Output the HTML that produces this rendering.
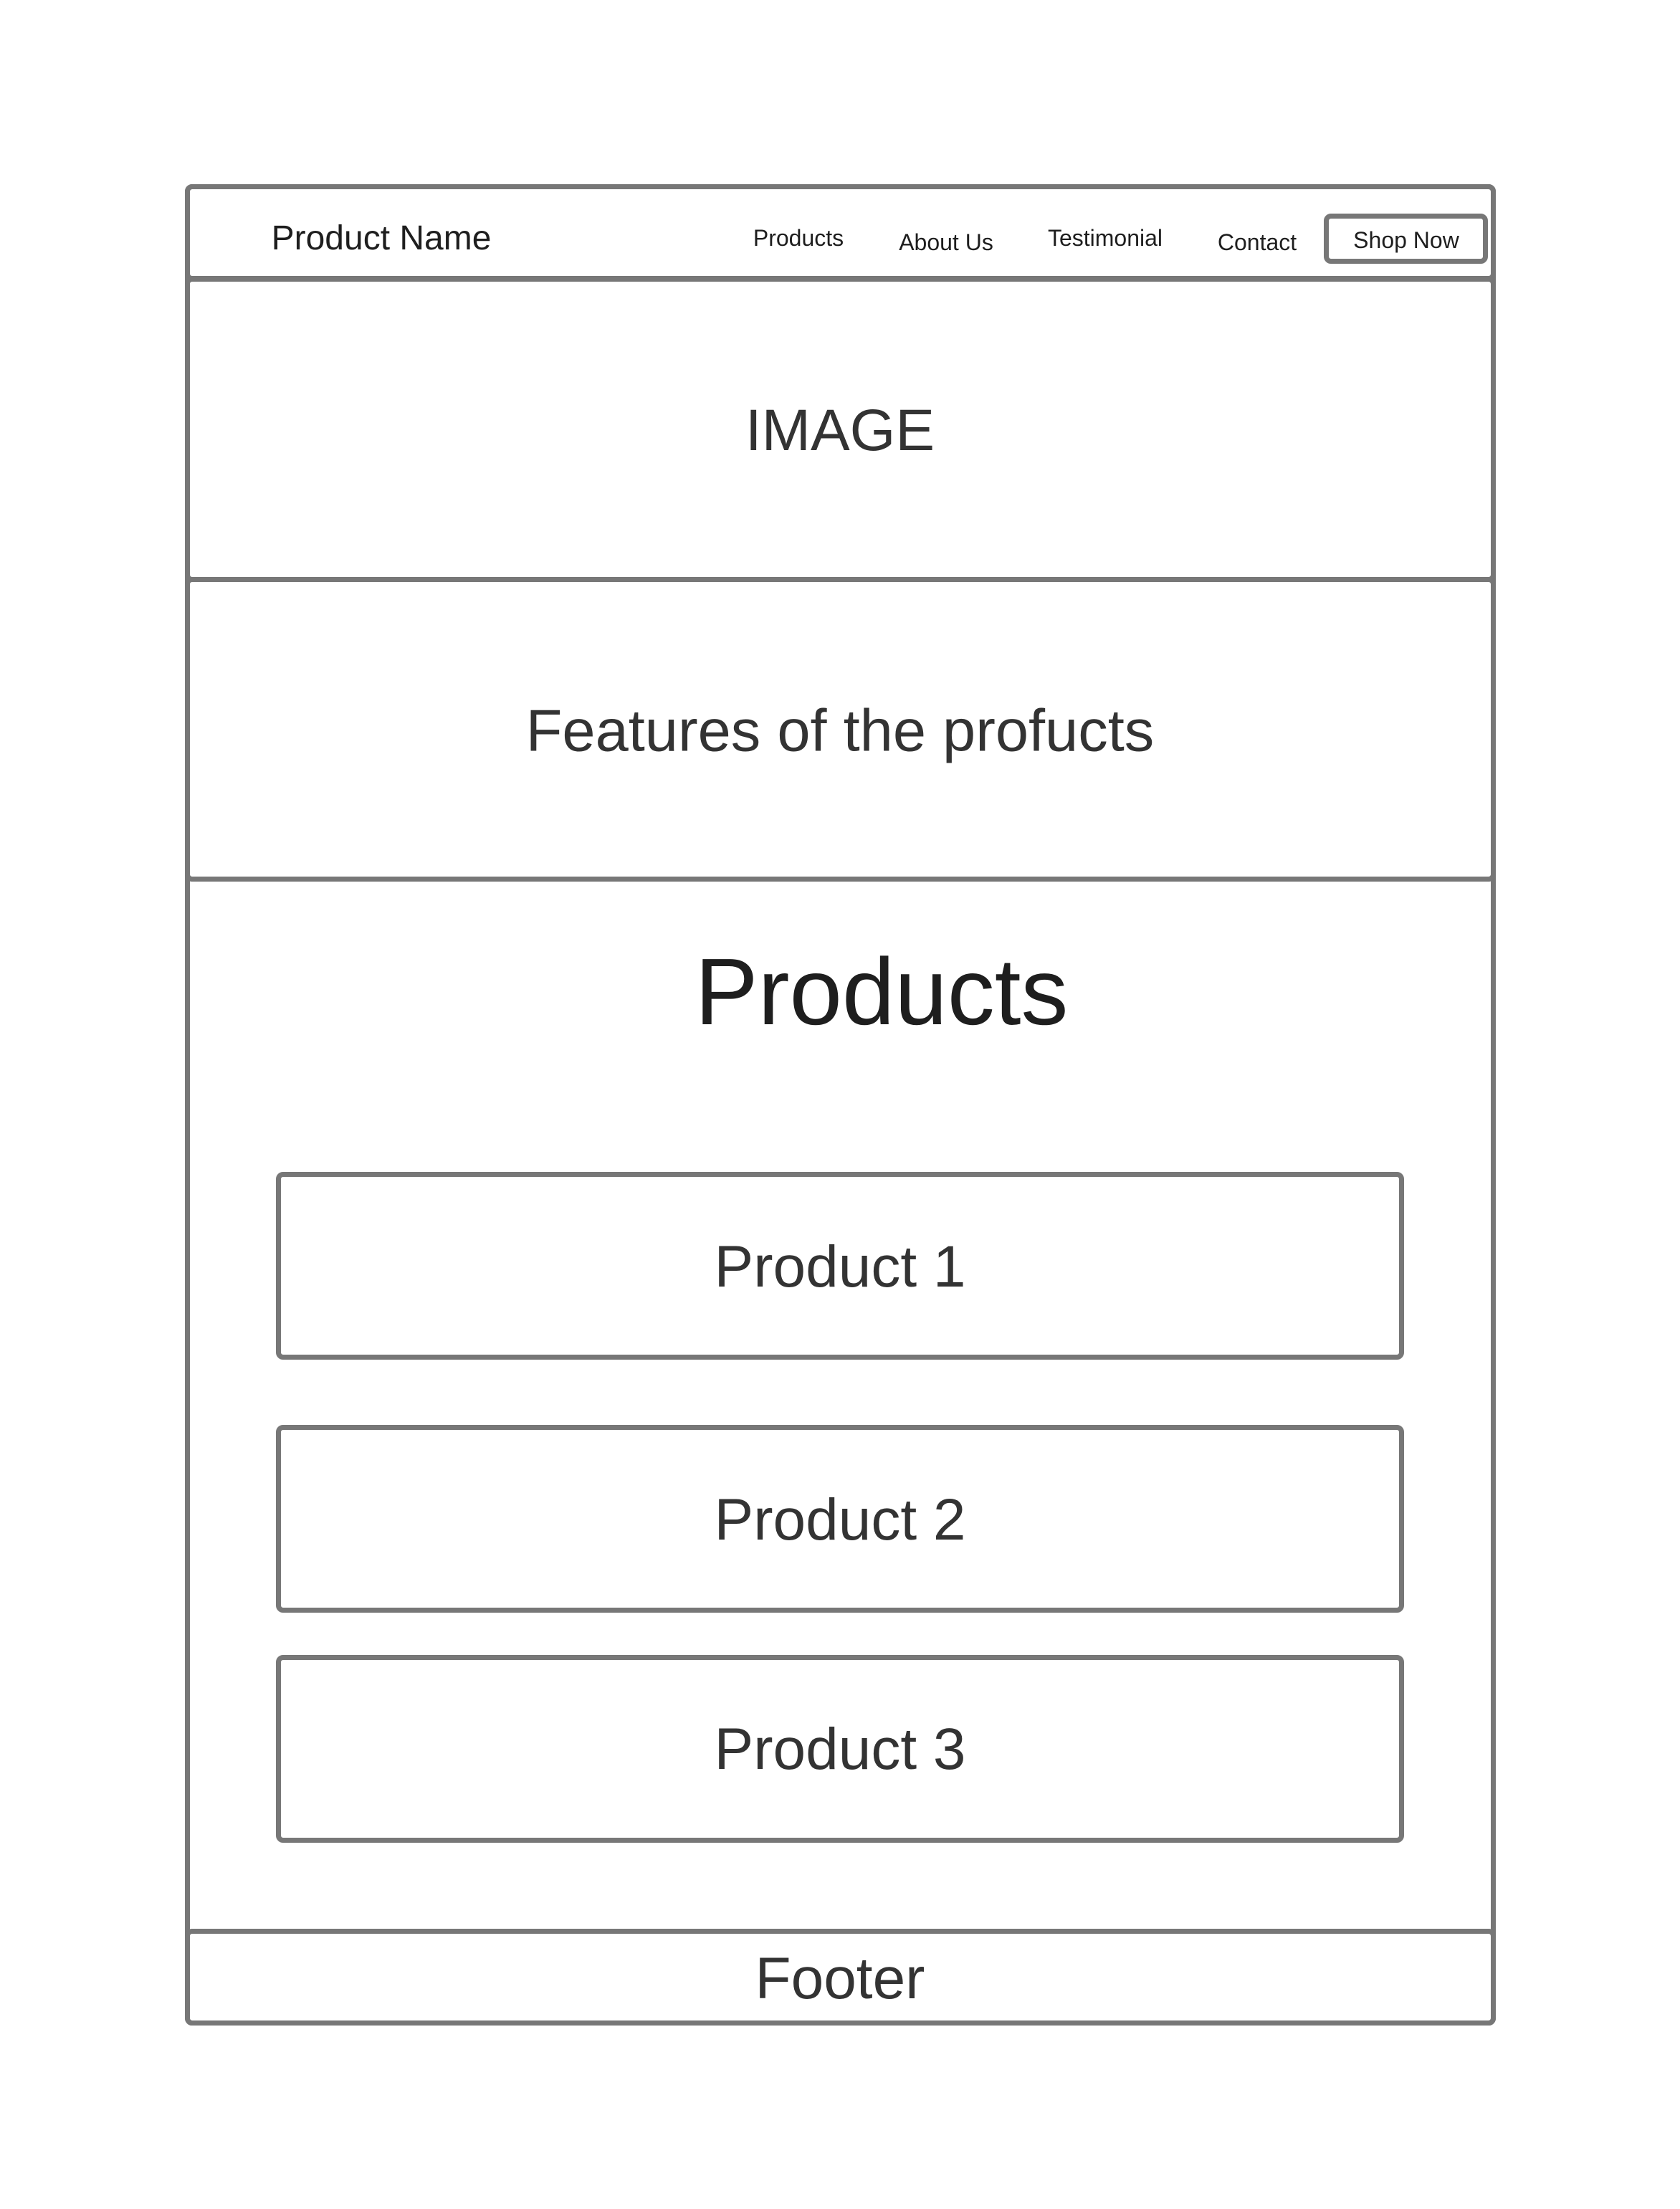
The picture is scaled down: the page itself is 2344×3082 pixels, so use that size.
<!DOCTYPE html>
<html><head><meta charset="utf-8"><style>
html,body{margin:0;padding:0;background:#fff;}
body{width:2344px;height:3082px;position:relative;font-family:"Liberation Sans",sans-serif;color:#333;overflow:hidden;}
.b{position:absolute;border:7px solid #777;border-radius:10px;box-sizing:border-box;}
.t{position:absolute;white-space:nowrap;transform:translate(-50%,-50%);line-height:1;}
</style></head><body>
<div class="b" style="left:258px;top:257px;width:1829px;height:2569px;"></div>
<div class="b" style="left:258px;top:257px;width:1829px;height:135px;"></div>
<div class="b" style="left:258px;top:386px;width:1829px;height:426px;"></div>
<div class="b" style="left:258px;top:805px;width:1829px;height:425px;"></div>
<div class="b" style="left:258px;top:2691px;width:1829px;height:135px;"></div>
<div class="b" style="left:1847px;top:298px;width:229px;height:70px;"></div>

<div class="t" style="left:532px;top:333px;font-size:48px;color:#1e1e1e;">Product Name</div>
<div class="t" style="left:1114px;top:332px;font-size:32px;color:#1e1e1e;">Products</div>
<div class="t" style="left:1320px;top:338px;font-size:32px;color:#1e1e1e;">About Us</div>
<div class="t" style="left:1542px;top:332px;font-size:32px;color:#1e1e1e;">Testimonial</div>
<div class="t" style="left:1754px;top:338px;font-size:32px;color:#1e1e1e;">Contact</div>
<div class="t" style="left:1962px;top:335px;font-size:32px;color:#1e1e1e;">Shop Now</div>

<div class="t" style="left:1172px;top:601px;font-size:82px;">IMAGE</div>
<div class="t" style="left:1172px;top:1019px;font-size:83px;">Features of the profucts</div>
<div class="t" style="left:1230px;top:1384px;font-size:132px;color:#1e1e1e;">Products</div>

<div class="b" style="left:385px;top:1635px;width:1574px;height:262px;"></div>
<div class="b" style="left:385px;top:1988px;width:1574px;height:262px;"></div>
<div class="b" style="left:385px;top:2309px;width:1574px;height:262px;"></div>
<div class="t" style="left:1172px;top:1768px;font-size:82px;">Product 1</div>
<div class="t" style="left:1172px;top:2121px;font-size:82px;">Product 2</div>
<div class="t" style="left:1172px;top:2441px;font-size:82px;">Product 3</div>

<div class="t" style="left:1172px;top:2761px;font-size:82px;">Footer</div>
</body></html>
